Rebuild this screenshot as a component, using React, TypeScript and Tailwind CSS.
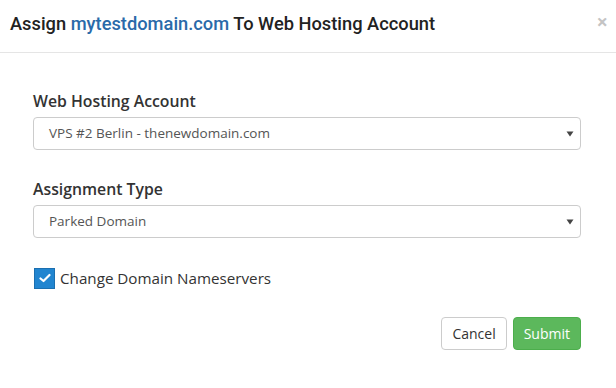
export default function App() {
  return (
    <div className="w-[616px] h-[388px] bg-white" style={{ fontFamily: '"Open Sans", sans-serif' }}>
      <div className="h-[53px] border-b border-[#e5e5e5] flex items-center justify-between pl-[10px] pr-[8px]">
        <div className="text-[18.3px] font-medium text-[#222] pb-[4px]" style={{ fontFamily: 'Roboto, sans-serif' }}>
          Assign <span className="text-[#2a6aa9]">mytestdomain.com</span> To Web Hosting Account
        </div>
        <button className="text-[#c4c4c4] text-[20px] leading-none pb-[8px] font-bold">×</button>
      </div>
      <div className="pl-[33px] pr-[35px] pt-[37px]">
        <div className="text-[15.8px] font-semibold text-[#333] leading-[22px] mb-[5px]">Web Hosting Account</div>
        <div className="h-[33px] border border-[#ccc] rounded-[4px] flex items-center justify-between pl-[15px] pr-[6px] text-[13.5px] text-[#555]">
          <span>VPS #2 Berlin - thenewdomain.com</span>
          <Caret />
        </div>
        <div className="text-[15.8px] font-semibold text-[#333] leading-[22px] mt-[28px] mb-[5px]">Assignment Type</div>
        <div className="h-[33px] border border-[#ccc] rounded-[4px] flex items-center justify-between pl-[15px] pr-[6px] text-[13.5px] text-[#555]">
          <span>Parked Domain</span>
          <Caret />
        </div>
        <div className="flex items-center mt-[29px]">
          <div className="w-[21px] h-[21px] bg-[#2185d0] border border-[#1b6fb0] flex items-center justify-center ml-[1px]">
            <svg width="12" height="10" viewBox="0 0 12 10" fill="none" stroke="white" strokeWidth="2.2" strokeLinecap="round" strokeLinejoin="round">
              <polyline points="1.5 5.5 4.5 8 10.5 2" />
            </svg>
          </div>
          <span className="ml-[5px] text-[15.2px] text-[#333]">Change Domain Nameservers</span>
        </div>
        <div className="flex justify-end gap-[6px] mt-[27px]">
          <button className="h-[33px] px-[10px] border border-[#ccc] rounded-[4px] bg-white text-[14px] text-[#333]">Cancel</button>
          <button className="h-[33px] px-[10px] border border-[#4cae4c] rounded-[4px] bg-[#5cb85c] text-[14px] text-white">Submit</button>
        </div>
      </div>
    </div>
  );
}

function Caret() {
  return (
    <svg width="8" height="6" viewBox="0 0 8 6">
      <polygon points="0.5 0.5 7.5 0.5 4 5.5" fill="#444" />
    </svg>
  );
}
